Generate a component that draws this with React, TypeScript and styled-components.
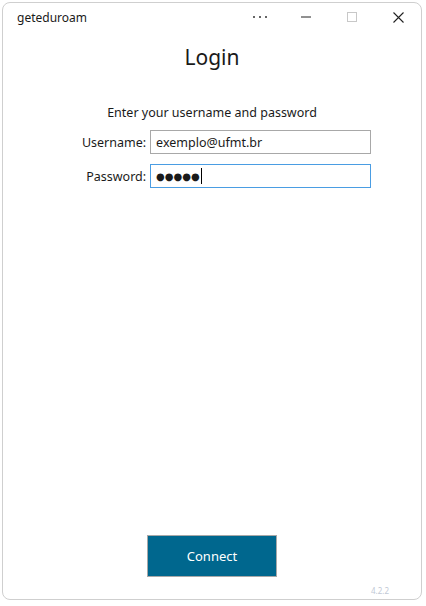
import React from "react";
import styled, { createGlobalStyle } from "styled-components";

const GlobalStyle = createGlobalStyle`
  html, body {
    margin: 0;
    padding: 0;
    background: #ffffff;
  }
  * {
    box-sizing: border-box;
  }
`;

const App = () => {
  return (
    <>
      <GlobalStyle />
      <Window>
        <TitleBar>
          <AppName>geteduroam</AppName>
          <Controls>
            <CtrlButton aria-label="more">
              <svg width="16" height="4" viewBox="0 0 16 4">
                <circle cx="2" cy="2" r="1" fill="#333" />
                <circle cx="8" cy="2" r="1" fill="#333" />
                <circle cx="14" cy="2" r="1" fill="#333" />
              </svg>
            </CtrlButton>
            <CtrlButton aria-label="minimize">
              <svg width="10" height="2" viewBox="0 0 10 2">
                <line x1="0" y1="1" x2="10" y2="1" stroke="#222" strokeWidth="1" />
              </svg>
            </CtrlButton>
            <CtrlButton aria-label="maximize">
              <svg width="10" height="10" viewBox="0 0 10 10">
                <rect x="0.5" y="0.5" width="9" height="9" fill="none" stroke="#c8c8c8" strokeWidth="1" />
              </svg>
            </CtrlButton>
            <CtrlButton aria-label="close">
              <svg width="11" height="11" viewBox="0 0 11 11">
                <path d="M0.5 0.5 L10.5 10.5 M10.5 0.5 L0.5 10.5" stroke="#222" strokeWidth="1.1" />
              </svg>
            </CtrlButton>
          </Controls>
        </TitleBar>
        <Content>
          <Heading>Login</Heading>
          <Instruction>Enter your username and password</Instruction>
          <Form>
            <Label>Username:</Label>
            <Field>exemplo@ufmt.br</Field>
            <Label>Password:</Label>
            <Field $focused>
              <Dots>●●●●●</Dots>
              <Caret />
            </Field>
          </Form>
          <Footer>
            <ConnectButton>Connect</ConnectButton>
          </Footer>
          <Version>4.2.2</Version>
        </Content>
      </Window>
    </>
  );
};

export default App;

const Window = styled.div`
  margin: 2px 4px 6px 2px;
  height: 598px;
  border: 1px solid #cfcfcf;
  border-radius: 8px;
  background: #ffffff;
  display: flex;
  flex-direction: column;
  font-family: "Noto Sans", "Open Sans", sans-serif;
  color: #1a1a1a;
  overflow: hidden;
`;

const TitleBar = styled.div`
  height: 28px;
  display: flex;
  align-items: center;
  justify-content: space-between;
  padding-left: 14px;
`;

const AppName = styled.span`
  font-size: 12px;
  color: #1a1a1a;
`;

const Controls = styled.div`
  display: flex;
  align-items: center;
`;

const CtrlButton = styled.div`
  width: 46px;
  height: 28px;
  display: flex;
  align-items: center;
  justify-content: center;
`;

const Content = styled.div`
  flex: 1;
  display: flex;
  flex-direction: column;
  align-items: center;
  padding-top: 11px;
`;

const Heading = styled.h1`
  margin: 0;
  font-size: 21px;
  font-weight: 400;
  line-height: 30px;
`;

const Instruction = styled.div`
  margin-top: 32px;
  font-size: 12.5px;
  line-height: 18px;
`;

const Form = styled.div`
  margin-top: 8px;
  margin-left: 29px;
  display: grid;
  grid-template-columns: auto 221px;
  column-gap: 4px;
  row-gap: 10px;
  align-items: center;
`;

const Label = styled.label`
  font-size: 12.5px;
  text-align: right;
`;

const Field = styled.div<{ $focused?: boolean }>`
  height: 24px;
  border: 1px solid ${(p) => (p.$focused ? "#4a9de3" : "#a8a8a8")};
  padding: 0 5px;
  font-size: 12.5px;
  display: flex;
  align-items: center;
  color: #1a1a1a;
`;

const Dots = styled.span`
  font-size: 10px;
  font-family: "DejaVu Sans", sans-serif;
`;

const Caret = styled.span`
  display: inline-block;
  width: 1px;
  height: 16px;
  background: #000;
  margin-left: 1px;
`;

const Footer = styled.div`
  margin-top: auto;
  display: flex;
  justify-content: center;
  width: 100%;
`;

const ConnectButton = styled.button`
  width: 130px;
  height: 42px;
  background: #00678e;
  border: 1px solid #a8a8a8;
  color: #ffffff;
  font-family: "Noto Sans", "Open Sans", sans-serif;
  font-size: 13px;
`;

const Version = styled.div`
  align-self: flex-end;
  margin: 8px 32px 3px 0;
  font-size: 8px;
  color: #c2c9d6;
`;
